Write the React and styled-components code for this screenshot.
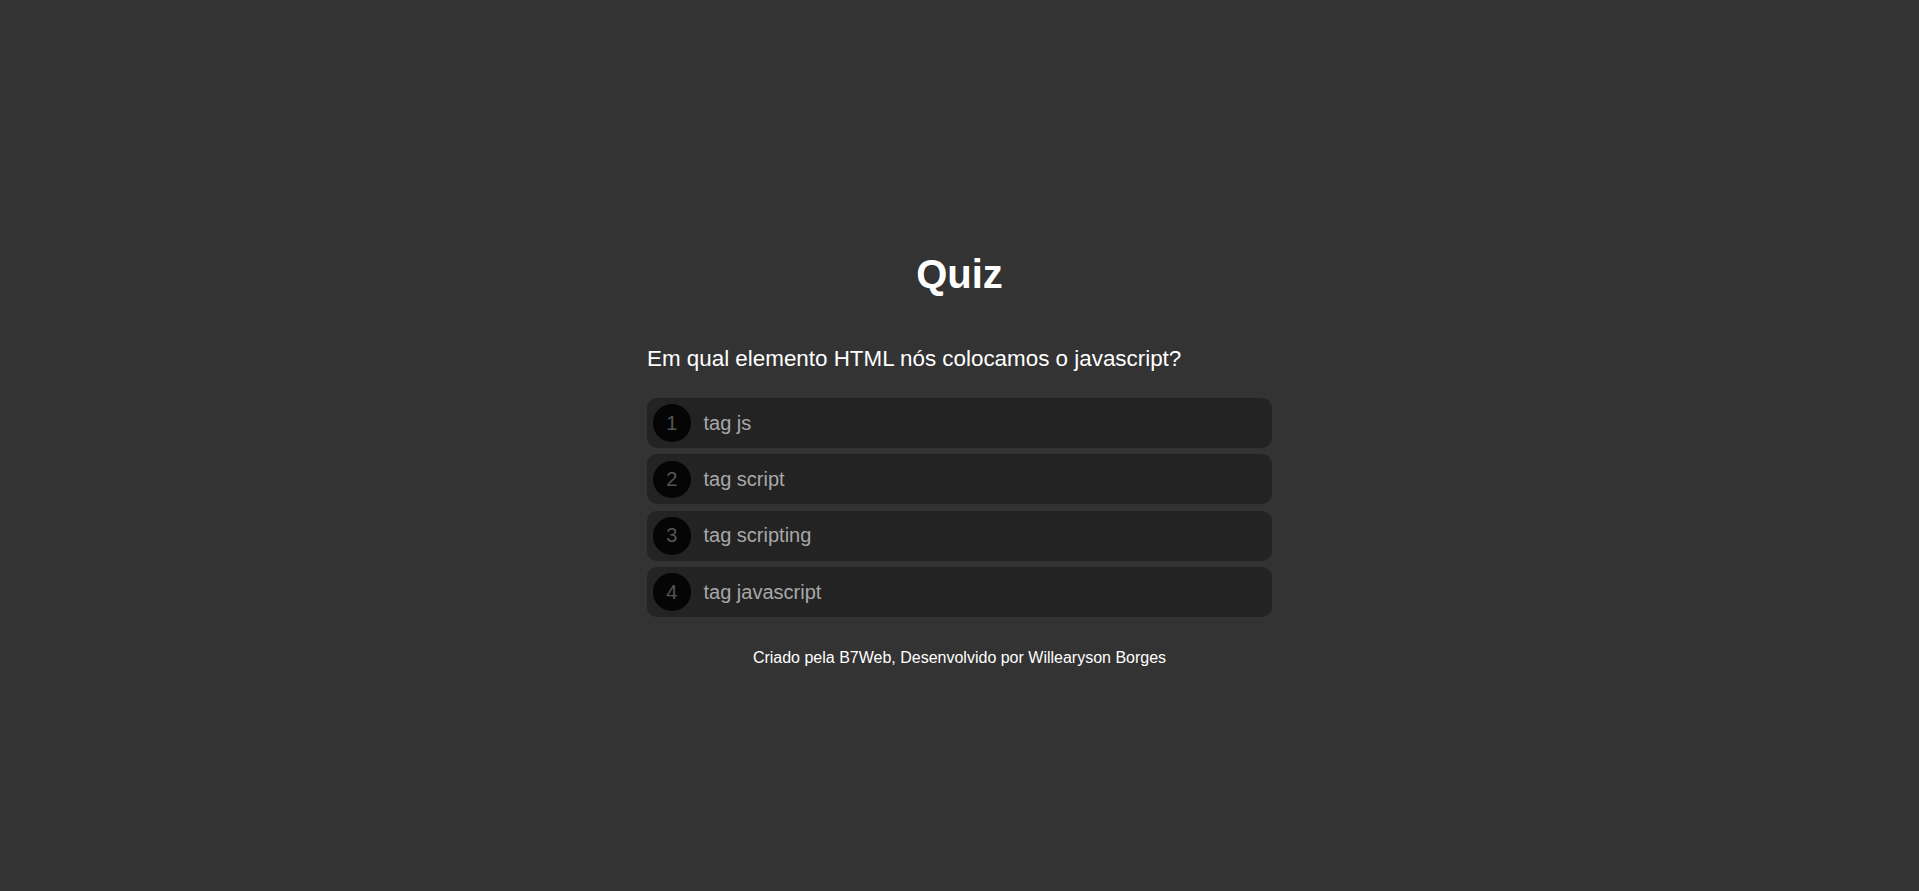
import React from "react";
import styled, { createGlobalStyle } from "styled-components";

const GlobalStyle = createGlobalStyle`
  html, body {
    margin: 0;
    padding: 0;
    background: #333333;
    font-family: "Liberation Sans", Arial, sans-serif;
  }
`;

const Page = styled.main`
  min-height: 891px;
  box-sizing: border-box;
  padding-top: 251px;
  display: flex;
  flex-direction: column;
  align-items: center;
`;

const Container = styled.div`
  width: 625px;
  display: flex;
  flex-direction: column;
`;

const Title = styled.h1`
  margin: 0;
  font-size: 40px;
  font-weight: bold;
  line-height: 46px;
  color: #ffffff;
  text-align: center;
`;

const Question = styled.p`
  margin: 49px 0 0;
  font-size: 22.4px;
  line-height: 26px;
  color: #ffffff;
`;

const Options = styled.div`
  margin-top: 26px;
  display: flex;
  flex-direction: column;
  gap: 6.4px;
`;

const Option = styled.div`
  display: flex;
  align-items: center;
  gap: 13px;
  padding: 6px;
  height: 50px;
  box-sizing: border-box;
  background: #232323;
  border-radius: 10px;
  cursor: pointer;
`;

const Num = styled.span`
  width: 37.5px;
  height: 37.5px;
  flex: none;
  border-radius: 50%;
  background: #050505;
  color: #555555;
  font-size: 20px;
  display: flex;
  align-items: center;
  justify-content: center;
`;

const OptionText = styled.span`
  font-size: 20px;
  color: #a8a8a8;
`;

const Footer = styled.footer`
  margin-top: 32px;
  font-size: 16px;
  line-height: 18px;
  color: #ffffff;
  text-align: center;
`;

const options = ["tag js", "tag script", "tag scripting", "tag javascript"];

export default function App() {
  return (
    <>
      <GlobalStyle />
      <Page>
        <Container>
          <Title>Quiz</Title>
          <Question>Em qual elemento HTML nós colocamos o javascript?</Question>
          <Options>
            {options.map((o, i) => (
              <Option key={o}>
                <Num>{i + 1}</Num>
                <OptionText>{o}</OptionText>
              </Option>
            ))}
          </Options>
          <Footer>Criado pela B7Web, Desenvolvido por Willearyson Borges</Footer>
        </Container>
      </Page>
    </>
  );
}
